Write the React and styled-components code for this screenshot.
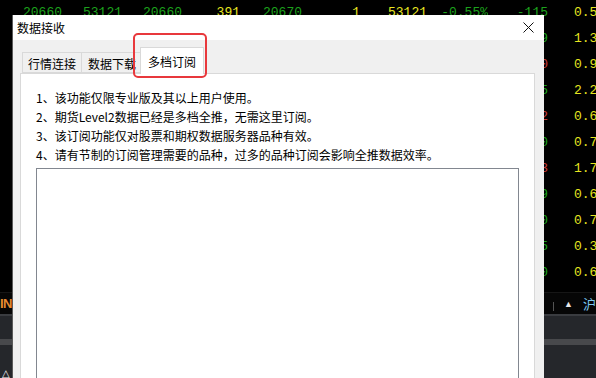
import React from 'react';
import styled, { createGlobalStyle } from 'styled-components';

const GlobalStyle = createGlobalStyle`
  html, body {
    margin: 0;
    padding: 0;
    background: #000;
  }
`;

const GREEN = '#1ca21c';
const YELLOW = '#e6e620';
const RED = '#c83c3c';

const Screen = styled.div`
  position: relative;
  width: 596px;
  height: 378px;
  overflow: hidden;
  background: #000;
  display: flex;
  flex-direction: column;
`;

const Quotes = styled.div`
  height: 292px;
  font-family: "Liberation Mono", "DejaVu Sans Mono", monospace;
  font-size: 13px;
`;

const QuoteRow = styled.div`
  display: grid;
  grid-template-columns: 62px 60px 60px 58px 62px 58px 67px 61px 60px 1fr;
  height: 26px;
  line-height: 26px;
  white-space: nowrap;
`;

const Cell = styled.span`
  color: ${p => p.$c};
  text-align: right;
  overflow: hidden;
  &:last-child {
    text-align: left;
    padding-left: 26px;
  }
`;

const StatusStrip = styled.div`
  height: 21px;
  background: #060606;
  border-top: 1px solid #161616;
  border-bottom: 2px solid #3a3c40;
  display: flex;
  align-items: center;
  justify-content: space-between;
  font-family: "Liberation Sans", "Noto Sans CJK SC", sans-serif;
  font-size: 12px;
`;

const StripTag = styled.span`
  color: #e88a30;
  font-weight: bold;
  font-size: 13px;
  letter-spacing: -0.5px;
`;

const StripRight = styled.div`
  display: flex;
  align-items: center;
  gap: 10px;
`;

const StripMark = styled.span`
  color: ${p => p.$c || '#ddd'};
  font-size: ${p => p.$size || 12}px;
`;

const StripSep = styled.span`
  width: 1px;
  height: 9px;
  background: #555;
  margin-top: 6px;
`;

const Lower = styled.div`
  flex: 1;
  background: #25272b;
  padding-top: 23px;
  display: flex;
  flex-direction: column;
  justify-content: space-between;
`;

const Band = styled.div`
  height: 6px;
  background: #48494c;
`;

const LowerMark = styled.span`
  color: #eee;
  font-size: 10px;
  line-height: 8px;
  padding-left: 2px;
  font-family: "DejaVu Sans", sans-serif;
`;

/* dialog window on top of the terminal */
const Dialog = styled.div`
  position: absolute;
  left: 13px;
  top: 15px;
  width: 531px;
  height: 380px;
  background: #f0f0f0;
  box-shadow: -1px 0 0 #5a5a5a;
  font-family: "Noto Sans CJK SC", "Microsoft YaHei", sans-serif;
  font-size: 12px;
  color: #000;
`;

const TitleBar = styled.div`
  height: 25px;
  background: #fff;
  display: flex;
  align-items: center;
  justify-content: space-between;
  padding: 0 10px 0 4px;
`;

const Title = styled.span`
  line-height: 25px;
`;

const CloseIcon = () => (
  <svg width="11" height="11" viewBox="0 0 11 11">
    <path d="M0.5 0.5 L10.5 10.5 M10.5 0.5 L0.5 10.5" stroke="#111" strokeWidth="1" />
  </svg>
);

const Body = styled.div`
  padding: 7px 9px 0 7px;
`;

const TabRow = styled.div`
  display: flex;
  align-items: flex-end;
  padding-left: 2px;
  height: 26px;
  position: relative;
  z-index: 1;
`;

const Tab = styled.div`
  box-sizing: border-box;
  height: ${p => (p.$active ? 27 : 21)}px;
  padding: ${p => (p.$active ? '0 7px' : `1px ${p.$padR ?? 5}px 0 ${p.$padL ?? 5}px`)};
  margin-left: ${p => (p.$active ? -3 : 0)}px;
  margin-right: ${p => (p.$active ? 0 : -1)}px;
  margin-bottom: ${p => (p.$active ? -1 : 0)}px;
  background: ${p => (p.$active ? '#fff' : '#f0f0f0')};
  border: 1px solid #d9d9d9;
  border-bottom: ${p => (p.$active ? 'none' : '1px solid #d9d9d9')};
  display: flex;
  align-items: center;
  white-space: nowrap;
  position: relative;
  z-index: ${p => (p.$active ? 2 : 1)};
`;

const Highlight = styled.div`
  position: absolute;
  box-sizing: border-box;
  left: 113px;
  top: -14px;
  width: 74px;
  height: 45px;
  border: 2.5px solid #e8383c;
  border-radius: 5px;
  pointer-events: none;
  z-index: 3;
`;

const Panel = styled.div`
  background: #fff;
  border: 1px solid #d9d9d9;
  height: 320px;
  padding: 14px 15px 0 15px;
`;

const Notes = styled.div`
  line-height: 19px;
  font-size: 12px;
`;

const ListBox = styled.div`
  margin-top: 4px;
  height: 230px;
  border: 1px solid #828790;
  background: #fff;
`;

const rows = [
  [['20660', GREEN], ['53121', GREEN], ['20660', GREEN], ['391', YELLOW], ['20670', GREEN], ['1', YELLOW], ['53121', YELLOW], ['-0.55%', GREEN], ['-115', GREEN], ['0.55%', YELLOW]],
  [['3845', GREEN], ['1204', GREEN], ['3845', GREEN], ['12', YELLOW], ['3846', GREEN], ['3', YELLOW], ['1204', YELLOW], ['-0.21%', GREEN], ['-9', GREEN], ['1.39%', YELLOW]],
  [['5120', RED], ['8820', RED], ['5120', RED], ['35', YELLOW], ['5122', RED], ['2', YELLOW], ['8820', YELLOW], ['0.43%', RED], ['20', RED], ['0.90%', YELLOW]],
  [['2325', GREEN], ['4410', GREEN], ['2325', GREEN], ['87', YELLOW], ['2326', GREEN], ['5', YELLOW], ['4410', YELLOW], ['-0.65%', GREEN], ['-15', GREEN], ['2.25%', YELLOW]],
  [['7832', RED], ['2210', RED], ['7832', RED], ['41', YELLOW], ['7834', RED], ['1', YELLOW], ['2210', YELLOW], ['0.15%', RED], ['12', RED], ['0.62%', YELLOW]],
  [['1660', GREEN], ['6650', GREEN], ['1660', GREEN], ['22', YELLOW], ['1661', GREEN], ['4', YELLOW], ['6650', YELLOW], ['-0.60%', GREEN], ['-10', GREEN], ['0.70%', YELLOW]],
  [['9215', RED], ['3310', RED], ['9215', RED], ['18', YELLOW], ['9217', RED], ['2', YELLOW], ['3310', YELLOW], ['0.25%', RED], ['23', RED], ['1.72%', YELLOW]],
  [['4455', GREEN], ['5120', GREEN], ['4455', GREEN], ['63', YELLOW], ['4456', GREEN], ['1', YELLOW], ['5120', YELLOW], ['-0.20%', GREEN], ['-9', GREEN], ['0.60%', YELLOW]],
  [['3120', GREEN], ['1870', GREEN], ['3120', GREEN], ['30', YELLOW], ['3121', GREEN], ['6', YELLOW], ['1870', YELLOW], ['-0.32%', GREEN], ['-10', GREEN], ['0.76%', YELLOW]],
  [['6235', GREEN], ['2980', GREEN], ['6235', GREEN], ['14', YELLOW], ['6236', GREEN], ['2', YELLOW], ['2980', YELLOW], ['-0.24%', GREEN], ['-15', GREEN], ['0.35%', YELLOW]],
  [['8810', GREEN], ['4470', GREEN], ['8810', GREEN], ['52', YELLOW], ['8812', GREEN], ['3', YELLOW], ['4470', YELLOW], ['-0.11%', GREEN], ['-10', GREEN], ['0.68%', YELLOW]],
];

const notes = [
  '1、该功能仅限专业版及其以上用户使用。',
  '2、期货Level2数据已经是多档全推，无需这里订阅。',
  '3、该订阅功能仅对股票和期权数据服务器品种有效。',
  '4、请有节制的订阅管理需要的品种，过多的品种订阅会影响全推数据效率。',
];

export default function App() {
  return (
    <>
      <GlobalStyle />
      <Screen>
        <Quotes>
          {rows.map((r, i) => (
            <QuoteRow key={i}>
              {r.map(([v, c], j) => (
                <Cell key={j} $c={c}>{v}</Cell>
              ))}
            </QuoteRow>
          ))}
        </Quotes>
        <StatusStrip>
          <StripTag>IN</StripTag>
          <StripRight>
            <StripMark $c="#c8603c">±</StripMark>
            <StripSep />
            <StripMark $c="#e8e8e8" $size={9}>▲</StripMark>
            <StripMark $c="#7cc8f0" $size={13}>沪</StripMark>
          </StripRight>
        </StatusStrip>
        <Lower>
          <Band />
          <LowerMark>△</LowerMark>
        </Lower>

        <Dialog>
          <TitleBar>
            <Title>数据接收</Title>
            <CloseIcon />
          </TitleBar>
          <Body>
            <TabRow>
              <Tab>行情连接</Tab>
              <Tab $padL={6} $padR={7}>数据下载</Tab>
              <Tab $active>多档订阅</Tab>
              <Highlight />
            </TabRow>
            <Panel>
              <Notes>
                {notes.map(n => (
                  <div key={n}>{n}</div>
                ))}
              </Notes>
              <ListBox />
            </Panel>
          </Body>
        </Dialog>
      </Screen>
    </>
  );
}
